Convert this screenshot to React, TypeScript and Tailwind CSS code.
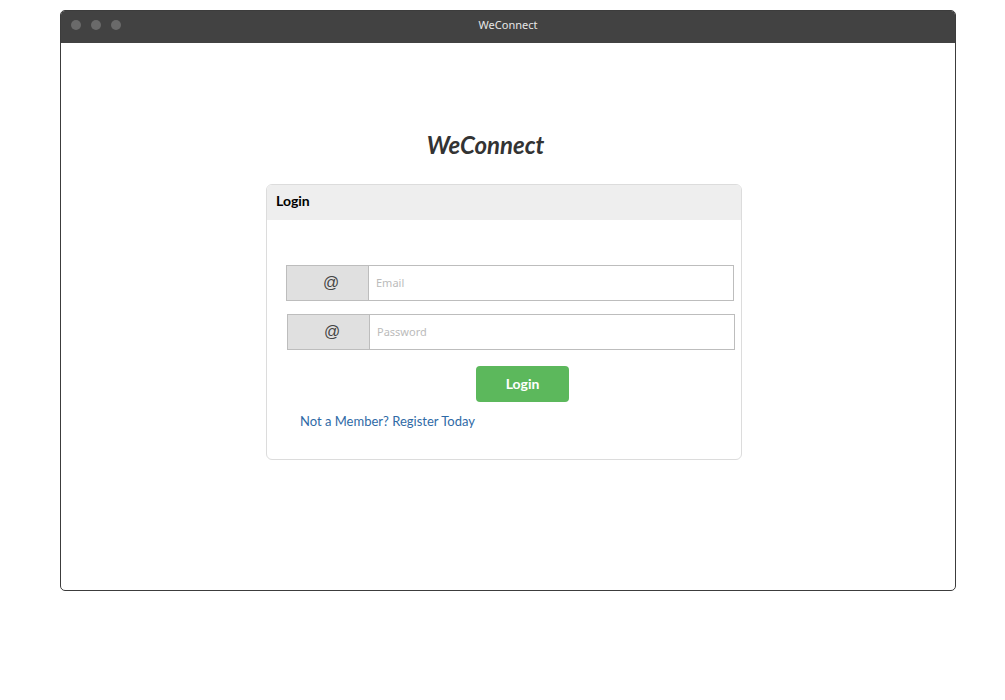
import React from "react";

export default function App() {
  return (
    <div className="w-[1005px] h-[700px] bg-white pt-[10px] pl-[60px]" style={{ fontFamily: "Lato, 'Noto Sans', sans-serif" }}>
      <div className="w-[896px] h-[581px] border border-[#3c3c3c] rounded-[5px] overflow-hidden flex flex-col bg-white">
        <div className="h-[32px] bg-[#424242] flex items-center relative shrink-0">
          <div className="flex gap-[10px] pl-[10px] pb-[4px]">
            <span className="w-[10px] h-[10px] rounded-full bg-[#6a6a6a]" />
            <span className="w-[10px] h-[10px] rounded-full bg-[#6a6a6a]" />
            <span className="w-[10px] h-[10px] rounded-full bg-[#6a6a6a]" />
          </div>
          <div className="absolute inset-0 flex items-center justify-center pb-[3px] text-[11px] text-[#e6e6e6]" style={{ fontFamily: "'Noto Sans', sans-serif" }}>
            WeConnect
          </div>
        </div>
        <div className="pl-[205px] pt-[87px]">
          <h1 className="w-[439px] text-center text-[24px] leading-[30px] font-bold italic text-[#333]">WeConnect</h1>
          <div className="mt-[24px] w-[476px] h-[276px] border border-[#dcdcdc] rounded-[6px] overflow-hidden">
            <div className="h-[35px] bg-[#eeeeee] flex items-center pl-[9px] pb-[4px] text-[14px] font-bold text-black">Login</div>
            <div className="pt-[45px] pl-[19px]">
              <div className="flex w-[448px] h-[36px]">
                <div className="w-[83px] bg-[#e0e0e0] border border-[#bdbdbd] flex items-center justify-center pl-[7px] text-[16px] text-[#444]" style={{ fontFamily: "'Liberation Sans', sans-serif" }}>@</div>
                <input placeholder="Email" className="flex-1 border border-l-0 border-[#bdbdbd] px-[7px] text-[11px] placeholder:text-[#bbb] outline-none" style={{ fontFamily: "'Noto Sans', sans-serif" }} />
              </div>
              <div className="flex w-[448px] h-[36px] mt-[13px] ml-[1px]">
                <div className="w-[83px] bg-[#e0e0e0] border border-[#bdbdbd] flex items-center justify-center pl-[7px] text-[16px] text-[#444]" style={{ fontFamily: "'Liberation Sans', sans-serif" }}>@</div>
                <input placeholder="Password" type="password" className="flex-1 border border-l-0 border-[#bdbdbd] px-[7px] text-[11px] placeholder:text-[#bbb] outline-none" style={{ fontFamily: "'Noto Sans', sans-serif" }} />
              </div>
              <button className="mt-[16px] ml-[190px] w-[93px] h-[36px] pb-[2px] rounded-[4px] bg-[#5cb85c] text-white text-[14px] font-bold">Login</button>
              <div className="mt-[10px] ml-[14px] text-[13px] text-[#2f6aa6] leading-[18px]">Not a Member? Register Today</div>
            </div>
          </div>
        </div>
      </div>
    </div>
  );
}
